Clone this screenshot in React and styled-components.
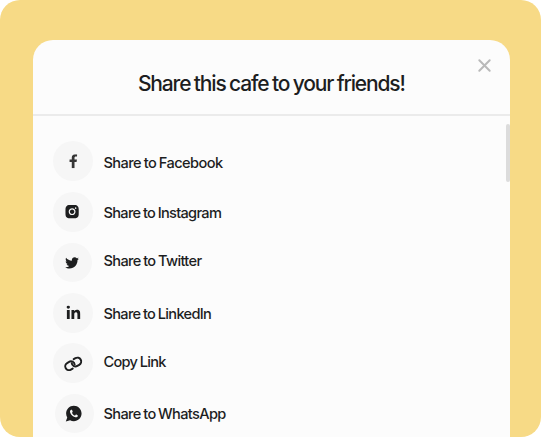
import React from 'react';
import styled, { createGlobalStyle } from 'styled-components';
import { FaFacebookF, FaTwitter, FaLinkedinIn } from 'react-icons/fa';
import { AiFillInstagram } from 'react-icons/ai';
import { IoLogoWhatsapp } from 'react-icons/io';

const GlobalStyle = createGlobalStyle`
  * { box-sizing: border-box; }
  body { margin: 0; background: #fff; }
`;

const Backdrop = styled.main`
  width: 541px;
  height: 437px;
  padding: 40.3px 31px 0 32.7px;
  overflow: hidden;
  border-radius: 20px;
  background: #f7da86;
  color: #1d1e1f;
  font-family: Inter, 'Liberation Sans', sans-serif;
`;

const Dialog = styled.section`
  position: relative;
  height: 397px;
  border-radius: 20px 20px 0 0;
  background: #fcfcfc;
`;

const Header = styled.header`
  display: flex;
  justify-content: center;
  height: 75.7px;
  padding-top: 29.7px;
  border-bottom: 2px solid #ebebeb;
`;

const Title = styled.h1`
  margin: 0;
  font-size: 21px;
  line-height: 28px;
  font-weight: 500;
  letter-spacing: -1.15px;
  word-spacing: -1px;
  white-space: nowrap;
`;

const CloseButton = styled.button`
  position: absolute;
  top: 17.7px;
  right: 18px;
  display: flex;
  padding: 0;
  border: 0;
  background: none;
  color: #b9b9b9;
`;

const ScrollThumb = styled.div`
  position: absolute;
  top: 83.7px;
  right: 0;
  width: 4px;
  height: 58px;
  border-radius: 2px;
  background: #dcdcdc;
`;

const ShareList = styled.ul`
  display: flex;
  flex-direction: column;
  gap: 10.6px;
  margin: 0;
  padding: 25px 20px 0;
  list-style: none;
`;

const ShareRow = styled.li`
  display: flex;
  align-items: center;
  height: 40px;
`;

const IconCircle = styled.span`
  display: flex;
  align-items: center;
  justify-content: center;
  flex: none;
  width: ${({ $size = 40 }) => $size}px;
  height: ${({ $size = 40 }) => $size}px;
  margin-left: ${({ $inset = 0 }) => $inset}px;
  border-radius: 50%;
  background: #f6f6f6;

  svg {
    flex: none;
    transform: translate(${({ $x = 0 }) => $x}px, ${({ $y = 0 }) => $y}px);
  }
`;

const Label = styled.span`
  margin-left: auto;
  width: 386.5px;
  font-size: 14.6px;
  line-height: 20px;
  font-weight: 500;
  letter-spacing: ${({ $tracking }) => $tracking}px;
  word-spacing: -0.7px;
  white-space: nowrap;
  transform: translateY(${({ $y = 0 }) => $y}px);
`;

function ChainIcon() {
  return (
    <svg width="20" height="18" viewBox="-10 -9 20 18" fill="none" stroke="currentColor" strokeWidth="2" strokeLinecap="round">
      <g transform="rotate(-30)">
        <path d="M-2.8 3.8H-4.8A3.8 3.8 0 0 1 -4.8 -3.8H-2.6A3.6 3.6 0 0 1 0.9 1.3" />
        <path d="M2.8 -3.8H4.8A3.8 3.8 0 0 1 4.8 3.8H2.6A3.6 3.6 0 0 1 -0.9 -1.3" />
      </g>
    </svg>
  );
}

const options = [
  { label: 'Share to Facebook', icon: <FaFacebookF size={14} color="#353535" />, x: 0.3, y: 0.2, labelY: 2, tracking: -0.58 },
  { label: 'Share to Instagram', icon: <AiFillInstagram size={17} />, x: -0.4, y: 0.2, labelY: 1.3, tracking: -0.7 },
  { label: 'Share to Twitter', icon: <FaTwitter size={13.8} />, circle: 39, x: 0.1, y: 1, labelY: -1, tracking: -0.66 },
  { label: 'Share to LinkedIn', icon: <FaLinkedinIn size={15.5} />, x: 0.7, y: 0.4, labelY: 0.5, tracking: -0.69 },
  { label: 'Copy Link', icon: <ChainIcon />, x: 0.2, y: 0.9, labelY: -1.2, tracking: -0.72 },
  { label: 'Share to WhatsApp', icon: <IoLogoWhatsapp size={18} />, circle: 39, inset: 2, x: -0.3, y: -0.3, labelY: -0.2, tracking: -0.65 },
];

export default function App() {
  return (
    <>
      <GlobalStyle />
      <Backdrop>
        <Dialog role="dialog" aria-labelledby="share-title">
          <Header>
            <Title id="share-title">Share this cafe to your friends!</Title>
          </Header>
          <CloseButton type="button" aria-label="Close">
            <svg width="15" height="15" viewBox="0 0 15 15" fill="none" stroke="currentColor" strokeWidth="2" strokeLinecap="round">
              <path d="M2.3 2.3L12.7 12.7M12.7 2.3L2.3 12.7" />
            </svg>
          </CloseButton>
          <ShareList>
            {options.map(({ label, icon, circle, inset, x, y, labelY, tracking }) => (
              <ShareRow key={label}>
                <IconCircle $size={circle} $inset={inset} $x={x} $y={y}>{icon}</IconCircle>
                <Label $y={labelY} $tracking={tracking}>{label}</Label>
              </ShareRow>
            ))}
          </ShareList>
          <ScrollThumb />
        </Dialog>
      </Backdrop>
    </>
  );
}
